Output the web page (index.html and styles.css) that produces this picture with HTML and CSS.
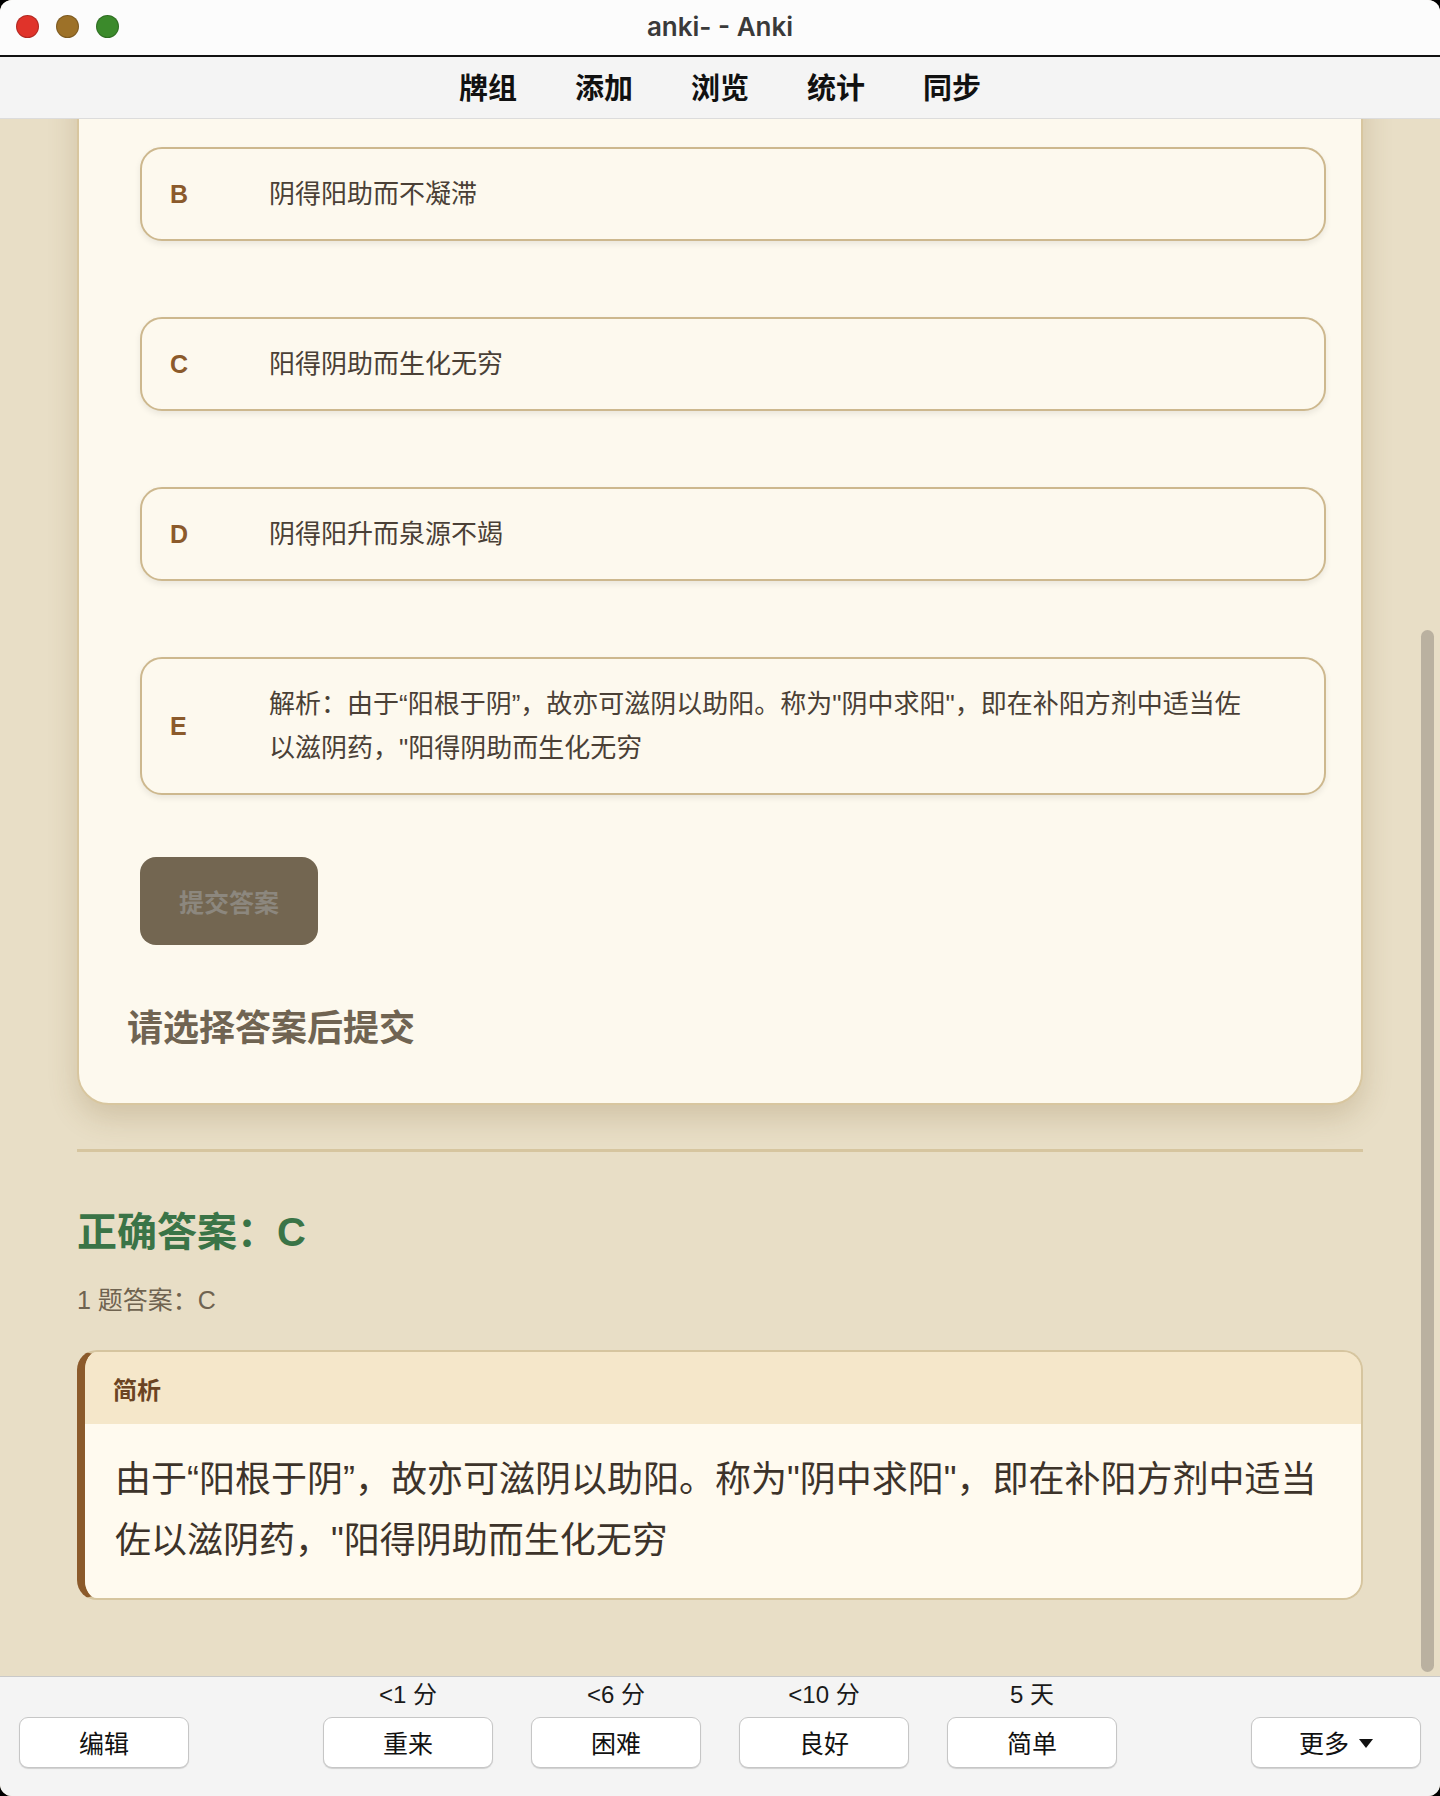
FILE: index.html
```html
<!DOCTYPE html>
<html lang="zh-CN">
<head>
	<meta charset="UTF-8">
	<title>anki- - Anki</title>
	<link rel="stylesheet" href="styles.css">
</head>
<body>
	<div class="window">
		<!-- 窗口标题栏 -->
		<div class="titlebar">
			<div class="lights">
				<span class="light light-close"></span>
				<span class="light light-min"></span>
				<span class="light light-max"></span>
			</div>
			<div class="title">anki- - Anki</div>
			<div></div>
		</div>

		<!-- 顶部菜单 -->
		<nav class="toolbar">
			<a>牌组</a>
			<a>添加</a>
			<a>浏览</a>
			<a>统计</a>
			<a>同步</a>
		</nav>

		<!-- 卡片内容 -->
		<main class="reviewer">
			<div class="page">
				<div class="card">
					<div class="options">
						<div class="option">
							<span class="letter">B</span>
							<span class="option-text">阴得阳助而不凝滞</span>
						</div>
						<div class="option">
							<span class="letter">C</span>
							<span class="option-text">阳得阴助而生化无穷</span>
						</div>
						<div class="option">
							<span class="letter">D</span>
							<span class="option-text">阴得阳升而泉源不竭</span>
						</div>
						<div class="option">
							<span class="letter">E</span>
							<span class="option-text">解析：由于“阳根于阴”，故亦可滋阴以助阳。称为"阴中求阳"，即在补阳方剂中适当佐以滋阴药，"阳得阴助而生化无穷</span>
						</div>
					</div>
					<button type="button" class="submit" disabled>提交答案</button>
					<p class="hint">请选择答案后提交</p>
				</div>

				<div class="divider"></div>

				<h2 class="correct">正确答案：C</h2>
				<p class="answer-line">1 题答案：C</p>

				<div class="analysis">
					<div class="analysis-head">简析</div>
					<div class="analysis-body">由于“阳根于阴”，故亦可滋阴以助阳。称为"阴中求阳"，即在补阳方剂中适当佐以滋阴药，"阳得阴助而生化无穷</div>
				</div>
			</div>
			<div class="scroll-thumb"></div>
		</main>

		<!-- 底部评分按钮 -->
		<footer class="answer-bar">
			<button type="button" class="bar-btn">编辑</button>
			<div class="ease-group">
				<div class="ease">
					<span class="ease-time">&lt;1 分</span>
					<button type="button" class="bar-btn">重来</button>
				</div>
				<div class="ease">
					<span class="ease-time">&lt;6 分</span>
					<button type="button" class="bar-btn">困难</button>
				</div>
				<div class="ease">
					<span class="ease-time">&lt;10 分</span>
					<button type="button" class="bar-btn">良好</button>
				</div>
				<div class="ease">
					<span class="ease-time">5 天</span>
					<button type="button" class="bar-btn">简单</button>
				</div>
			</div>
			<button type="button" class="bar-btn">更多
				<svg class="caret" width="14" height="9" viewBox="0 0 14 9"><path d="M0 0h14L7 9z" fill="#111"/></svg>
			</button>
		</footer>
	</div>
</body>
</html>
```

FILE: styles.css
```css
* {
	box-sizing: border-box;
}

body {
	margin: 0;
	background-color: #000;
	font-family: "Liberation Sans", "Noto Sans CJK SC", sans-serif;
}

.window {
	display: flex;
	flex-direction: column;
	width: 1440px;
	height: 1796px;
	border-radius: 12px;
	overflow: hidden;
	background-color: #e8dec6;
}

/* 标题栏 */
.titlebar {
	display: grid;
	grid-template-columns: 1fr auto 1fr;
	align-items: center;
	height: 57px;
	padding: 0 16px 2px;
	background-color: #fcfcfc;
	border-bottom: 2px solid #111;
}

.lights {
	display: flex;
	gap: 17px;
}

.light {
	width: 23px;
	height: 23px;
	border-radius: 50%;
	border: 1px solid rgba(0, 0, 0, 0.2);
}

.light-close {
	background-color: #e0332a;
}

.light-min {
	background-color: #9d7128;
}

.light-max {
	background-color: #3b8a2b;
}

.title {
	font-family: "Inter", "Liberation Sans", sans-serif;
	font-size: 26px;
	font-weight: 600;
	color: #3a3a3a;
}

/* 菜单 */
.toolbar {
	display: flex;
	justify-content: center;
	align-items: center;
	gap: 58px;
	height: 62px;
	padding-bottom: 4px;
	background-color: #f4f4f4;
	border-bottom: 1px solid #dcdcdc;
}

.toolbar a {
	font-size: 29px;
	font-weight: bold;
	color: #111;
}

/* 阅读区 */
.reviewer {
	position: relative;
	flex: 1;
	overflow: hidden;
}

.page {
	width: 1286px;
	margin: -60px auto 0;
}

.card {
	padding: 86px 35px 47px 48px;
	background-color: #fdf9ee;
	border: 2px solid #d8c69f;
	border-radius: 32px;
	box-shadow: 0 12px 30px rgba(110, 80, 30, 0.2);
}

.options {
	display: flex;
	flex-direction: column;
	gap: 76px;
	margin-left: 13px;
}

.option {
	display: flex;
	align-items: center;
	padding: 23px 69px 23px 28px;
	background-color: #fdf9ee;
	border: 2px solid #cdb88e;
	border-radius: 22px;
	box-shadow: 0 3px 6px rgba(0, 0, 0, 0.08);
}

.letter {
	flex: none;
	width: 99px;
	font-size: 25px;
	font-weight: bold;
	color: #8b5a2b;
}

.option-text {
	font-size: 26px;
	line-height: 44px;
	color: #4a4036;
}

.submit {
	display: block;
	width: 178px;
	height: 88px;
	margin: 62px 0 0 13px;
	border: none;
	border-radius: 16px;
	background-color: #736651;
	font-family: inherit;
	font-size: 25px;
	font-weight: bold;
	color: #8c877e;
}

.hint {
	margin: 57px 0 0;
	font-size: 36px;
	line-height: 54px;
	font-weight: bold;
	color: #706452;
}

.divider {
	height: 3px;
	margin-top: 44px;
	background-color: #d6c59f;
}

.correct {
	margin: 52px 0 0;
	font-size: 40px;
	line-height: 56px;
	font-weight: bold;
	color: #3a7447;
}

.answer-line {
	margin: 21px 0 0;
	font-size: 25px;
	line-height: 38px;
	color: #6f6350;
}

.analysis {
	margin-top: 31px;
	border: 2px solid #d6c59f;
	border-left: 8px solid #8b5a2b;
	border-radius: 20px;
	overflow: hidden;
}

.analysis-head {
	display: flex;
	align-items: center;
	height: 72px;
	padding-left: 28px;
	background-color: #f5e7ca;
	font-size: 24px;
	font-weight: bold;
	color: #6b4423;
}

.analysis-body {
	padding: 25px 24px 27px 30px;
	background-color: #fffaef;
	font-size: 36px;
	line-height: 61px;
	color: #3d332a;
}

.scroll-thumb {
	position: absolute;
	top: 511px;
	right: 6px;
	width: 13px;
	height: 1042px;
	border-radius: 7px;
	background-color: #bab1a0;
}

/* 底部按钮栏 */
.answer-bar {
	display: flex;
	justify-content: space-between;
	align-items: flex-end;
	height: 120px;
	padding: 4px 19px 28px;
	background-color: #f4f4f4;
	border-top: 1px solid #c9c9c9;
}

.ease-group {
	display: flex;
	gap: 38px;
}

.ease {
	display: flex;
	flex-direction: column;
	align-items: center;
	gap: 8px;
}

.ease-time {
	font-size: 24px;
	line-height: 28px;
	color: #1a1a1a;
}

.bar-btn {
	display: flex;
	justify-content: center;
	align-items: center;
	gap: 10px;
	width: 170px;
	height: 51px;
	padding-bottom: 2px;
	background-color: #fff;
	border: 1px solid #c6c6c6;
	border-radius: 9px;
	box-shadow: 0 1px 1px rgba(0, 0, 0, 0.15);
	font-family: inherit;
	font-size: 25px;
	color: #111;
}

.caret {
	margin-top: 3px;
}
```
